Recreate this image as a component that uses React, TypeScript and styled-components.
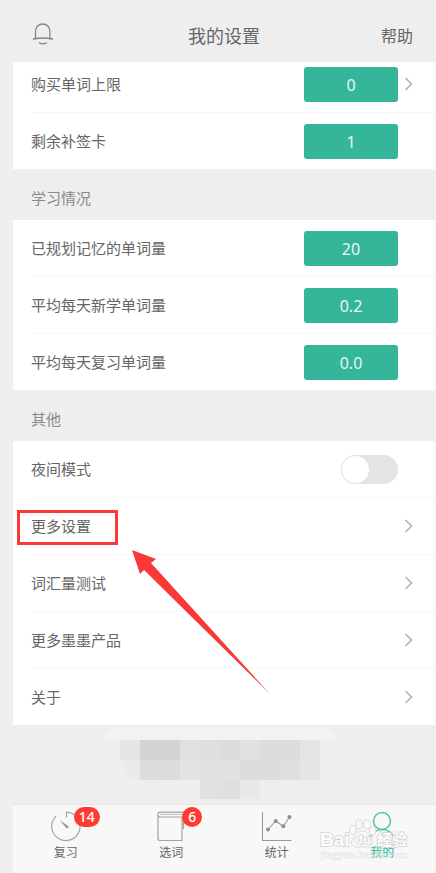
import React from "react";
import styled, { createGlobalStyle, css } from "styled-components";

const GlobalStyle = createGlobalStyle`
  *, *::before, *::after { box-sizing: border-box; }
  html, body, #root { height: 100%; }
  body {
    margin: 0;
    background: #efefef;
    color: #666;
    font-family: "Noto Sans CJK SC", "Noto Sans", sans-serif;
    font-size: 15px;
    line-height: 20px;
  }
  button { font: inherit; color: inherit; border: 0; padding: 0; background: none; cursor: pointer; }
`;

const Page = styled.div`
  min-height: 100%;
  display: flex;
  flex-direction: column;
  margin-left: 13px;
  border-right: 1px solid #f3f3f3;
  background: #eeeeee;
`;

const Header = styled.header`
  display: grid;
  grid-template-columns: 1fr auto 1fr;
  align-items: center;
  height: 62px;
  padding: 8px 18px 0;
`;

const Title = styled.h1`
  margin: 0;
  font-size: 18px;
  font-weight: 400;
  line-height: 24px;
`;

const BellButton = styled.button`
  justify-self: start;
  display: flex;
`;

const HelpButton = styled.button`
  justify-self: end;
  padding-right: 4px;
  font-size: 16px;
`;

const Group = styled.ul`
  margin: 0;
  padding: 0 0 0 18px;
  list-style: none;
  background: #fff;
`;

const Row = styled.li<{ $short?: boolean }>`
  display: flex;
  align-items: center;
  height: ${(p) => (p.$short ? "51px" : "57px")};
  padding-right: 20px;
  border-bottom: 1px solid #f8f8f8;
  ${(p) => p.$short && css`padding-bottom: 6px;`}
  &:last-child {
    height: 56px;
    border-bottom: 0;
  }
`;

const rowLayout = css`
  flex: 1;
  display: flex;
  align-items: center;
  justify-content: space-between;
  text-align: left;
`;

const RowButton = styled.button`
  ${rowLayout}
  align-self: stretch;
`;

const RowLabel = styled.label`
  ${rowLayout}
  padding-right: 17px;
`;

const RowStatic = styled.div`
  ${rowLayout}
  padding-right: 17px;
`;

const Trailing = styled.span`
  display: flex;
  align-items: center;
  gap: 4px;
`;

const Value = styled.span`
  width: 94px;
  height: 35px;
  border-radius: 3px;
  background: #35b69a;
  color: #e6f7f3;
  font-family: "Noto Sans", sans-serif;
  font-size: 16px;
  line-height: 37px;
  text-align: center;
`;

const SectionTitle = styled.h2`
  margin: 0;
  height: 51px;
  padding: 19px 18px 0;
  color: #8a8a8a;
  font-size: 15px;
  font-weight: 400;
  line-height: 20px;
`;

const Switch = styled.input`
  appearance: none;
  display: flex;
  width: 57px;
  height: 29px;
  margin: 0;
  padding: 1px;
  border-radius: 15px;
  background: #e4e4e4;
  cursor: pointer;
  &::before {
    content: "";
    width: 27px;
    height: 27px;
    border-radius: 50%;
    background: #fff;
  }
  &:checked { justify-content: flex-end; background: #35b69a; }
`;

const Marked = styled.span`
  position: relative;
  &::after {
    content: "";
    position: absolute;
    inset: -6px -27px -9px -14px;
    border: 3px solid #fb3838;
  }
`;

const Pointer = styled.svg`
  position: absolute;
  left: 100px;
  top: 33px;
  pointer-events: none;
`;

const Footer = styled.div`
  flex: 1;
  display: flex;
  justify-content: center;
  min-height: 79px;
  padding: 3px 8px 0 0;
`;

const TabBar = styled.nav`
  display: grid;
  grid-template-columns: repeat(4, 1fr);
  height: 69px;
  border-top: 1px solid #e6e6e6;
  background: #f7f8f7;
`;

const Tab = styled.button<{ $active?: boolean }>`
  position: relative;
  display: flex;
  flex-direction: column;
  align-items: center;
  padding-top: 4px;
  color: ${(p) => (p.$active ? "#43bfa5" : "#666")};
  font-size: 12px;
  font-weight: ${(p) => (p.$active ? 500 : 400)};
  line-height: 18px;
`;

const IconSlot = styled.span`
  position: relative;
  display: flex;
`;

const Badge = styled.span`
  position: absolute;
  left: 38px;
  top: -2px;
  transform: translateX(-50%);
  min-width: 20px;
  height: 20px;
  padding: 0 5px;
  border-radius: 10px;
  background: #fd3b30;
  color: #fff;
  font-family: "Noto Sans", sans-serif;
  font-size: 14px;
  font-weight: 500;
  line-height: 20px;
  text-align: center;
`;

const Watermark = styled.svg`
  position: absolute;
  right: 25px;
  top: 8px;
  pointer-events: none;
`;

const BellIcon = () => (
  <svg width="24" height="24" viewBox="0 0 24 24" fill="none" stroke="#858585" strokeWidth="1.3" strokeLinecap="round">
    <path d="M4.500 15.700V8.500C4.500 4 7.600 1 11.700 1s7.200 3 7.200 7.500v7.200" />
    <path d="M2.400 16c6-1.300 12.800-1.300 19 0M8.300 19.800c2 1.300 5 1.300 7 0" />
  </svg>
);

const Chevron = () => (
  <svg width="13" height="16" viewBox="0 0 13 16" fill="none" stroke="#b2b2b2" strokeWidth="1.600">
    <path d="M3.500 2l6 6-6 6" />
  </svg>
);

const TimerIcon = () => (
  <svg width="34" height="34" viewBox="0 0 34 34" fill="none" stroke="#a6a6a6" strokeWidth="1.200">
    <path d="M7 7.200A14.200 14.200 0 1 0 17.500 3.200V8.500" />
    <path d="M10.500 11l8.700 6.200a1.300 1.300 0 0 1-1.800 1.800z" fill="#8d8d8d" stroke="none" />
  </svg>
);

const BookIcon = () => (
  <svg width="34" height="34" viewBox="0 0 34 34" fill="none" stroke="#a3a3a3" strokeWidth="1.200">
    <path d="M4 5.500v24a2 2 0 0 0 2 2h22V8H6.500C3 8 3 3.200 6.500 3.200H29.500V20" />
    <path d="M6 5.400h23" stroke="#c9c9c9" />
  </svg>
);

const ChartIcon = () => (
  <svg width="34" height="34" viewBox="0 0 34 34" fill="none" stroke="#999" strokeWidth="1.100">
    <path d="M2.500 3v28.500h29" />
    <path d="M8 20.500l7.700-8.500 7.600 5.300L29.500 8" />
    <g fill="#8f8f8f" stroke="none">
      <circle cx="8" cy="20.500" r="2" />
      <circle cx="15.700" cy="12" r="2" />
      <circle cx="23.300" cy="17.300" r="2" />
      <circle cx="29.500" cy="8" r="2" />
    </g>
  </svg>
);

const PersonIcon = () => (
  <svg width="34" height="34" viewBox="0 0 34 34" fill="none" stroke="#4fc4ab" strokeWidth="1.500">
    <circle cx="17" cy="12" r="8.500" />
    <path d="M5 29.500c1-5.500 6-9 12-9s11 3.500 12 9" />
  </svg>
);

const BaiduMark = () => (
  <Watermark width="90" height="50" viewBox="0 0 90 50">
    <g fill="#fafafa" stroke="#d9d9d9" strokeWidth="1">
      <ellipse cx="33" cy="17" rx="3.200" ry="4.500" />
      <ellipse cx="39" cy="11" rx="3.200" ry="4.700" />
      <ellipse cx="47" cy="11.500" rx="3.200" ry="4.700" />
      <ellipse cx="52.500" cy="18" rx="3.200" ry="4.300" />
      <path d="M42.500 18c4 0 5 3 8 6s3 10-3 10H37c-6 0-7-6-3-10s4.500-6 8.500-6z" />
    </g>
    <g fill="#fdfdfd" stroke="#d4d4d4" strokeWidth="1.600" paintOrder="stroke" fontWeight="700">
      <text x="0" y="33" fontSize="19" fontFamily="Liberation Sans, sans-serif">Bai</text>
      <text x="35" y="31" fontSize="13" fontFamily="Liberation Sans, sans-serif">du</text>
      <text x="57" y="32" fontSize="15" fontFamily="Noto Sans CJK SC, sans-serif">经验</text>
    </g>
    <text x="0" y="45" fontSize="11" fontWeight="700" fontFamily="Liberation Serif, serif" fill="#fff" fillOpacity="0.6" stroke="#cfcfcf" strokeOpacity="0.5" strokeWidth="0.600">
      jingyan.baidu.com
    </text>
  </Watermark>
);

const mosaicRows: Array<Array<[number, string]>> = [
  [[16, "#e6e6e6"], [36, "#d4d4d4"], [56, "#d4d4d4"], [76, "#e0e0e0"], [96, "#dfdfdf"], [116, "#dcdcdc"], [136, "#e1e1e1"], [156, "#dddddd"], [176, "#dddddd"], [196, "#e4e4e4"]],
  [[36, "#dddddd"], [56, "#dcdcdc"], [76, "#e3e3e3"], [96, "#e1e1e1"], [116, "#e1e1e1"], [136, "#dddddd"], [156, "#dddddd"], [176, "#dfdfdf"], [196, "#e5e5e5"]],
  [[96, "#e0e0e0"], [116, "#dfdfdf"], [136, "#e8e8e8"]],
];

const Mosaic = () => (
  <svg width="232" height="71" viewBox="0 0 232 71" aria-hidden="true">
    <path d="M0 12C2 4 8 0 16 0H216c8 0 14 4 16 12z" fill="#f2f2f2" />
    <path d="M22 32h14v20c-12 0-18-10-14-20z" fill="#eaeaea" />
    {mosaicRows.map((cells, r) =>
      cells.map(([x, fill]) => (
        <rect key={`${r}-${x}`} x={x} y={12 + r * 20} width="20" height={r === 2 ? 19 : 20} fill={fill} />
      ))
    )}
  </svg>
);

const Arrow = () => (
  <Pointer width="140" height="146" viewBox="0 0 140 146" aria-hidden="true">
    <path d="M1 1L25 10 20 14 139 145 13 21 9 25z" fill="#fb3838" />
  </Pointer>
);

const stats = [
  { label: "已规划记忆的单词量", value: "20" },
  { label: "平均每天新学单词量", value: "0.2" },
  { label: "平均每天复习单词量", value: "0.0" },
];

const links = ["更多设置", "词汇量测试", "更多墨墨产品", "关于"];

const tabs = [
  { label: "复习", Icon: TimerIcon, badge: "14" },
  { label: "选词", Icon: BookIcon, badge: "6" },
  { label: "统计", Icon: ChartIcon },
  { label: "我的", Icon: PersonIcon, active: true },
];

export default function App() {
  return (
    <>
      <GlobalStyle />
      <Page>
        <Header>
          <BellButton aria-label="通知"><BellIcon /></BellButton>
          <Title>我的设置</Title>
          <HelpButton>帮助</HelpButton>
        </Header>
        <main>
          <Group>
            <Row $short>
              <RowButton>
                购买单词上限
                <Trailing><Value>0</Value><Chevron /></Trailing>
              </RowButton>
            </Row>
            <Row>
              <RowStatic>剩余补签卡<Value>1</Value></RowStatic>
            </Row>
          </Group>
          <SectionTitle>学习情况</SectionTitle>
          <Group>
            {stats.map((s) => (
              <Row key={s.label}>
                <RowStatic>{s.label}<Value>{s.value}</Value></RowStatic>
              </Row>
            ))}
          </Group>
          <SectionTitle>其他</SectionTitle>
          <Group>
            <Row>
              <RowLabel>夜间模式<Switch type="checkbox" role="switch" /></RowLabel>
            </Row>
            {links.map((label, i) => (
              <Row key={label}>
                <RowButton>
                  {i === 0 ? <Marked>{label}<Arrow /></Marked> : label}
                  <Chevron />
                </RowButton>
              </Row>
            ))}
          </Group>
        </main>
        <Footer><Mosaic /></Footer>
        <TabBar>
          {tabs.map(({ label, Icon, badge, active }) => (
            <Tab key={label} $active={active}>
              <IconSlot><Icon />{badge && <Badge>{badge}</Badge>}</IconSlot>
              {label}
              {active && <BaiduMark />}
            </Tab>
          ))}
        </TabBar>
      </Page>
    </>
  );
}
